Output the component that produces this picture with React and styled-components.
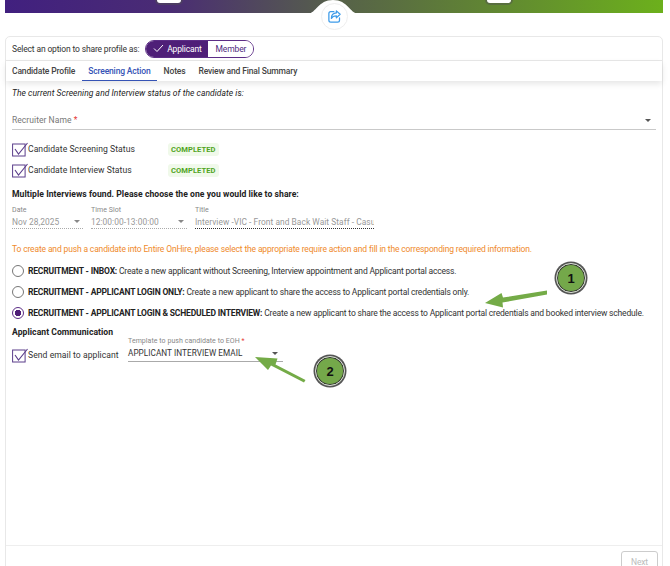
import React from "react"
import styled, {createGlobalStyle} from "styled-components"

const GlobalStyle = createGlobalStyle`
  html, body {
    margin: 0;
    padding: 0;
    background: #fff;
    font-family: Roboto, "Liberation Sans", sans-serif;
    color: #2b2b2b;
  }
`

const CheckBox = () => (
    <CheckIcon viewBox="0 0 16 15">
        <rect x="0.6" y="2" width="12.500" height="12" fill="none" stroke="#5a3d8a" strokeWidth="1"/>
        <path d="M3 7l3.5 5L15.500 1" fill="none" stroke="#5a3d8a" strokeWidth="1.1"/>
    </CheckIcon>
)

const Caret = ({color}) => (
    <CaretIcon color={color}/>
)

const App = () => {
    return (
        <Page>
            <GlobalStyle/>
            <Banner>
                <BannerPill/>
                <BannerPill/>
            </Banner>
            <Notch viewBox="0 0 50 14">
                <path d="M0 13.500C8 13.500 10 0 25 0s17 13.500 25 13.500z" fill="#fff"/>
            </Notch>
            <ShareButton>
                <svg width="15" height="15" viewBox="0 0 24 24" fill="none" stroke="#3d9be9" strokeWidth="2"
                     strokeLinecap="round" strokeLinejoin="round">
                    <path d="M11 4H6a3 3 0 0 0-3 3v11a3 3 0 0 0 3 3h11a3 3 0 0 0 3-3v-4"/>
                    <path d="M15 3l6 5.5-6 5.5v-3.2c-4 0-6.500 1.200-8 4.200 0-5 2.500-8.500 8-8.800z"/>
                </svg>
            </ShareButton>

            <Card>
                <OptionRow>
                    <span>Select an option to share profile as:</span>
                    <Toggle>
                        <ToggleItem active>
                            <svg width="11" height="9" viewBox="0 0 11 9" fill="none" stroke="#fff" strokeWidth="1">
                                <path d="M1 4.500l3 3L10 1"/>
                            </svg>
                            Applicant
                        </ToggleItem>
                        <ToggleItem>Member</ToggleItem>
                    </Toggle>
                </OptionRow>
                <Tabs>
                    <Tab>Candidate Profile</Tab>
                    <Tab active>Screening Action</Tab>
                    <Tab>Notes</Tab>
                    <Tab>Review and Final Summary</Tab>
                </Tabs>

                <Body>
                    <Intro>The current Screening and Interview status of the candidate is:</Intro>
                    <RecruiterField>
                        <span>Recruiter Name <Required>*</Required></span>
                        <Caret color="#555"/>
                    </RecruiterField>

                    <StatusList>
                        <StatusRow>
                            <StatusLabel><CheckBox/>Candidate Screening Status</StatusLabel>
                            <Badge>COMPLETED</Badge>
                        </StatusRow>
                        <StatusRow>
                            <StatusLabel><CheckBox/>Candidate Interview Status</StatusLabel>
                            <Badge>COMPLETED</Badge>
                        </StatusRow>
                    </StatusList>

                    <SectionTitle>Multiple Interviews found. Please choose the one you would like to share:</SectionTitle>
                    <InterviewRow>
                        <DisabledField width="71px">
                            <small>Date</small>
                            <FieldValue>Nov 28,2025<Caret color="#888"/></FieldValue>
                        </DisabledField>
                        <DisabledField width="96px">
                            <small>Time Slot</small>
                            <FieldValue>12:00:00-13:00:00<Caret color="#888"/></FieldValue>
                        </DisabledField>
                        <DisabledField width="179px" dark>
                            <small>Title</small>
                            <FieldValue>Interview -VIC - Front and Back Wait Staff - Casual</FieldValue>
                        </DisabledField>
                    </InterviewRow>

                    <Warning>To create and push a candidate into Entire OnHire, please select the appropriate require action and fill in the corresponding required information.</Warning>

                    <RadioList>
                        <RadioRow>
                            <Radio/>
                            <span><b>RECRUITMENT - INBOX:</b> Create a new applicant without Screening, Interview appointment and Applicant portal access.</span>
                        </RadioRow>
                        <RadioRow>
                            <Radio/>
                            <span><b>RECRUITMENT - APPLICANT LOGIN ONLY:</b> Create a new applicant to share the access to Applicant portal credentials only.</span>
                        </RadioRow>
                        <RadioRow>
                            <Radio checked/>
                            <span><b>RECRUITMENT - APPLICANT LOGIN &amp; SCHEDULED INTERVIEW:</b> Create a new applicant to share the access to Applicant portal credentials and booked interview schedule.</span>
                        </RadioRow>
                    </RadioList>

                    <CommTitle>Applicant Communication</CommTitle>
                    <CommRow>
                        <SendLabel><CheckBox/>Send email to applicant</SendLabel>
                        <TemplateField>
                            <small>Template to push candidate to EOH <Required>*</Required></small>
                            <TemplateValue>APPLICANT INTERVIEW EMAIL<Caret color="#555"/></TemplateValue>
                        </TemplateField>
                    </CommRow>
                </Body>

                <Footer>
                    <NextButton>Next</NextButton>
                </Footer>
            </Card>

            <Annotations viewBox="0 0 670 566">
                <path d="M547 290.500l-44 7-1.500-4.500-16.500 10 18 4.500-.5-5 44.500-8z" fill="#74ab47"/>
                <path d="M305.500 380l-30-15.500 2-6-22.500-1.500 13 13 3-4.500 33 17z" fill="#74ab47"/>
            </Annotations>
            <Marker top="263px" left="556px">1</Marker>
            <Marker top="356px" left="315px">2</Marker>
        </Page>
    )
}

const Page = styled.div`
  position: relative;
  width: 670px;
  height: 566px;
  overflow: hidden;
  background: #fff;
`

const Banner = styled.div`
  height: 13px;
  margin: 0 7px 0 5px;
  background: linear-gradient(90deg, #41207f 0%, #4a2c74 25%, #56604a 50%, #5f8036 70%, #6cb01c 100%);
  display: flex;
  justify-content: space-between;
  padding: 0 152px;
`

const BannerPill = styled.div`
  width: 24px;
  height: 3px;
  background: #fff;
  border-radius: 0 0 4px 4px;
  box-shadow: 0 0 0 2px rgba(80, 80, 80, 0.45);
`

const Notch = styled.svg`
  position: absolute;
  top: 0;
  left: 308px;
  width: 50px;
  height: 14px;
`

const ShareButton = styled.div`
  position: absolute;
  top: 3px;
  left: 321px;
  width: 25px;
  height: 25px;
  border-radius: 50%;
  background: #fff;
  border: 1px solid #eeeeee;
  display: flex;
  align-items: center;
  justify-content: center;
`

const Card = styled.div`
  margin: 23px 7px 0 5px;
  height: 545px;
  box-sizing: border-box;
  border: 1px solid #e8e8e8;
  border-radius: 5px 5px 0 0;
  display: flex;
  flex-direction: column;
  font-size: 8.5px;
  letter-spacing: -0.15px;
`

const OptionRow = styled.div`
  height: 23px;
  padding: 0 6px;
  display: flex;
  align-items: center;
  gap: 6px;
  border-bottom: 1px solid #e8e8e8;
  color: #333;
`

const Toggle = styled.div`
  display: flex;
  height: 18px;
  border: 1px solid #5c2d86;
  border-radius: 9px;
  overflow: hidden;
  box-sizing: border-box;
`

const ToggleItem = styled.div`
  display: flex;
  align-items: center;
  justify-content: center;
  gap: 3px;
  width: ${({active}) => (active ? "62px" : "45px")};
  background: ${({active}) => (active ? "#4f1f78" : "#fff")};
  color: ${({active}) => (active ? "#fff" : "#4f2a80")};
`

const Tabs = styled.div`
  height: 20px;
  display: flex;
  align-items: stretch;
  box-shadow: 0 3px 6px rgba(0, 0, 0, 0.1);
  font-weight: 500;
`

const Tab = styled.div`
  padding: 0 6px;
  margin-right: 1px;
  display: flex;
  align-items: center;
  box-sizing: border-box;
  color: ${({active}) => (active ? "#3553b5" : "#444")};
  border-bottom: 1.5px solid ${({active}) => (active ? "#3553b5" : "transparent")};
`

const Body = styled.div`
  flex: 1;
  padding: 0 6px;
  display: flex;
  flex-direction: column;
`

const Intro = styled.div`
  margin-top: 7px;
  height: 11px;
  line-height: 11px;
  font-size: 8.5px;
  letter-spacing: 0.05px;
  font-style: italic;
  color: #222;
`

const RecruiterField = styled.div`
  margin-top: 12px;
  height: 19px;
  padding-right: 5px;
  box-sizing: border-box;
  display: flex;
  align-items: center;
  justify-content: space-between;
  border-bottom: 1.5px solid #c9c9c9;
  color: #777;
  font-size: 8.5px;
  letter-spacing: 0.05px;
`

const Required = styled.span`
  color: #e53935;
`

const CaretIcon = styled.i`
  display: inline-block;
  flex: none;
  width: 0;
  height: 0;
  border-left: 3.5px solid transparent;
  border-right: 3.5px solid transparent;
  border-top: 3.5px solid ${({color}) => color};
`

const StatusList = styled.div`
  margin-top: 9px;
  display: flex;
  flex-direction: column;
  gap: 1px;
`

const StatusRow = styled.div`
  display: flex;
  align-items: center;
  height: 20px;
`

const StatusLabel = styled.div`
  display: flex;
  align-items: center;
  width: 156px;
  color: #333;
  font-size: 8.6px;
  letter-spacing: 0.05px;
  white-space: nowrap;
`

const SendLabel = styled(StatusLabel)`
  width: 116px;
  margin-top: 11px;
`

const CheckIcon = styled.svg`
  width: 16px;
  height: 15px;
  flex: none;
`

const Badge = styled.div`
  padding: 2px 3px;
  background: #f0f9ea;
  border-radius: 3px;
  color: #4fa41d;
  font-weight: 700;
  font-size: 7.6px;
  letter-spacing: 0.05px;
`

const SectionTitle = styled.div`
  margin-top: 8px;
  height: 12px;
  line-height: 12px;
  font-size: 8.6px;
  letter-spacing: 0.05px;
  font-weight: 700;
  color: #222;
`

const InterviewRow = styled.div`
  display: flex;
  gap: 8px;
  margin-top: 6px;
`

const DisabledField = styled.div`
  width: ${({width}) => width};
  color: #999;
  border-bottom: 1px dotted ${({dark}) => (dark ? "#333" : "#aaa")};
  small {
    display: block;
    font-size: 7px;
    letter-spacing: 0.05px;
    line-height: 9px;
    color: #888;
  }
`

const FieldValue = styled.div`
  display: flex;
  align-items: center;
  justify-content: space-between;
  padding-right: 3px;
  height: 13px;
  font-size: 8.4px;
  letter-spacing: 0.05px;
  white-space: nowrap;
  overflow: hidden;
`

const Warning = styled.div`
  margin-top: 14px;
  height: 12px;
  line-height: 12px;
  white-space: nowrap;
  color: #ef8a2c;
`

const RadioList = styled.div`
  margin-top: 5px;
  display: flex;
  flex-direction: column;
`

const RadioRow = styled.div`
  display: flex;
  align-items: center;
  gap: 4px;
  height: 21px;
  white-space: nowrap;
  color: #333;
  letter-spacing: -0.18px;
  b {
    font-weight: 700;
    color: #222;
  }
`

const Radio = styled.i`
  display: block;
  flex: none;
  box-sizing: border-box;
  width: 12px;
  height: 12px;
  border-radius: 50%;
  border: 1px solid ${({checked}) => (checked ? "#5c2d86" : "#777")};
  background: ${({checked}) => (checked ? "radial-gradient(circle, #4f1f78 0 3px, #fff 3.500px)" : "#fff")};
`

const CommTitle = styled.div`
  margin-top: 2.5px;
  height: 12px;
  line-height: 12px;
  font-size: 8.6px;
  letter-spacing: 0.05px;
  font-weight: 700;
  color: #222;
`

const CommRow = styled.div`
  display: flex;
  align-items: flex-start;
  margin-top: -1px;
`

const TemplateField = styled.div`
  width: 155px;
  border-bottom: 1px solid #aaa;
  small {
    display: block;
    font-size: 7px;
    letter-spacing: 0.05px;
    line-height: 9px;
    color: #888;
  }
`

const TemplateValue = styled.div`
  display: flex;
  align-items: center;
  justify-content: space-between;
  padding-right: 5px;
  height: 15px;
  font-size: 8.2px;
  letter-spacing: 0.05px;
  color: #333;
`

const Footer = styled.div`
  height: 35px;
  box-sizing: border-box;
  border-top: 1px solid #eee;
  display: flex;
  justify-content: flex-end;
  padding: 5px 4px 0 0;
`

const NextButton = styled.div`
  width: 37px;
  height: 22px;
  box-sizing: border-box;
  border: 1px solid #ccc;
  border-radius: 3px;
  text-align: center;
  line-height: 20px;
  color: #bbb;
`

const Annotations = styled.svg`
  position: absolute;
  top: 0;
  left: 0;
  width: 670px;
  height: 566px;
  pointer-events: none;
`

const Marker = styled.div`
  position: absolute;
  top: ${({top}) => top};
  left: ${({left}) => left};
  width: 28px;
  height: 28px;
  border-radius: 50%;
  background: #74a84a;
  border: 1px solid #ddd;
  box-shadow: 0 0 0 1.5px #555, inset 0 0 0 1px #333;
  display: flex;
  align-items: center;
  justify-content: center;
  color: #111;
  font: 700 13px "Liberation Sans", sans-serif;
`

export default App
